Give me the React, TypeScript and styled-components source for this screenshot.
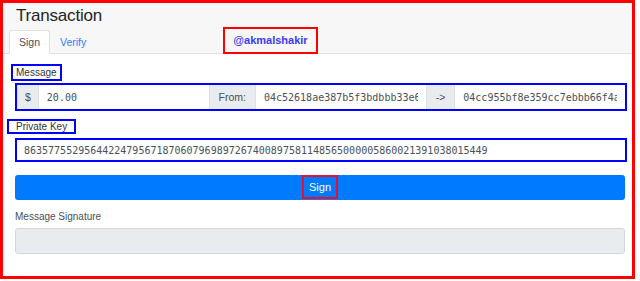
import React from "react";
import styled, { createGlobalStyle } from "styled-components";

const GlobalStyle = createGlobalStyle`
  html, body {
    margin: 0;
    padding: 0;
    background: #fff;
  }
  body {
    font-family: "Liberation Sans", Arial, sans-serif;
    color: #212529;
  }
  * {
    box-sizing: border-box;
  }
`;

const Card = styled.div`
  width: 635px;
  height: 279px;
  border: 3px solid #ff0000;
  display: flex;
  flex-direction: column;
  background: #fff;
`;

const Header = styled.div`
  background: #f7f7f7;
  border-bottom: 1px solid #dee2e6;
  padding-top: 3px;
  display: flex;
  flex-direction: column;
`;

const Title = styled.h1`
  margin: 0 0 4px 13px;
  font-size: 17px;
  line-height: 20px;
  font-weight: 400;
  letter-spacing: -0.2px;
  color: #212529;
`;

const Nav = styled.div`
  display: flex;
  align-items: flex-end;
  padding-left: 6px;
  height: 23px;
`;

const Tab = styled.div<{ $active?: boolean }>`
  height: 24px;
  margin-bottom: -1px;
  padding: 0 9px;
  font-size: 10.5px;
  line-height: 22px;
  border: 1px solid ${(p) => (p.$active ? "#dee2e6" : "transparent")};
  border-bottom: none;
  border-radius: 3px 3px 0 0;
  background: ${(p) => (p.$active ? "#fff" : "transparent")};
  color: ${(p) => (p.$active ? "#495057" : "#2f7dff")};
`;

const Stamp = styled.div`
  margin: 0 0 -1px 127px;
  height: 27px;
  padding: 0 8px;
  border: 2px solid #ff0000;
  font-size: 11px;
  font-weight: 700;
  line-height: 23px;
  color: #3b3bf5;
`;

const Body = styled.div`
  flex: 1;
  padding: 10px 7px 0 12px;
  display: flex;
  flex-direction: column;
  align-items: flex-start;
`;

const Label = styled.span<{ $shift: number; $pad: number; $lh: number }>`
  display: inline-block;
  margin-left: ${(p) => -p.$shift}px;
  padding: 0 ${(p) => p.$pad}px;
  border: 2px solid #0000ff;
  font-size: 10px;
  line-height: ${(p) => p.$lh}px;
  color: #333;
`;

const Group = styled.div`
  align-self: stretch;
  margin: 4px 0 0 2px;
  height: 24px;
  display: flex;
  outline: 2px solid #0000ff;
  background: #fff;
`;

const Addon = styled.div<{ $pad?: number }>`
  flex: none;
  display: flex;
  align-items: center;
  padding: 0 ${(p) => p.$pad ?? 9}px;
  background: #e9ecef;
  border-left: 1px solid #dde1e5;
  border-right: 1px solid #dde1e5;
  font-size: 10.5px;
  color: #495057;
`;

const Field = styled.input`
  flex: 1;
  min-width: 0;
  border: none;
  outline: none;
  padding: 0 8px;
  font-family: "DejaVu Sans Mono", "Liberation Mono", monospace;
  font-size: 10px;
  color: #495057;
  background: #fff;
`;

const KeyField = styled(Field)`
  flex: none;
  align-self: stretch;
  margin: 6px 0 0 2px;
  height: 20px;
  outline: 2px solid #0000ff;
  padding: 0 7px;
`;

const SignButton = styled.button`
  align-self: stretch;
  margin-top: 15px;
  height: 25px;
  border: none;
  border-radius: 3px;
  background: #007bff;
  padding: 0;
  display: flex;
  justify-content: center;
  align-items: flex-start;
  font-family: inherit;
  font-size: 11px;
  color: #fff;
`;

const ButtonText = styled.span`
  padding: 0 5px;
  border: 2px solid #e8102a;
  line-height: 20px;
`;

const PlainLabel = styled.div`
  margin-top: 10px;
  font-size: 10px;
  line-height: 13px;
  color: #495057;
`;

const Signature = styled.div`
  align-self: stretch;
  margin-top: 5px;
  height: 26px;
  background: #e9ecef;
  border: 1px solid #d3d8dd;
  border-radius: 3px;
`;

const fromKey =
  "04c52618ae387b5f3bdbbb33e6f1d09a2c7be4815d3a96c0f27e81b45d3ac9e07f51b2d6e843a0c97f1e25b8d40a6c3e95f712b0d84e6a3c9";
const toKey =
  "04cc955bf8e359cc7ebbb66f4a1c02d8e7b53f9a64c0e12d7b83f5a9e06c41d2b8f37e9a05c6d14b2e8f73a90c5d61e4b2a83f07c9d5e16";
const privateKey =
  "86357755295644224795671870607969897267400897581148565000005860021391038015449";

export default function App() {
  return (
    <>
      <GlobalStyle />
      <Card>
        <Header>
          <Title>Transaction</Title>
          <Nav>
            <Tab $active>Sign</Tab>
            <Tab>Verify</Tab>
            <Stamp>@akmalshakir</Stamp>
          </Nav>
        </Header>
        <Body>
          <Label $shift={4} $pad={3} $lh={13}>
            Message
          </Label>
          <Group>
            <Addon $pad={7}>$</Addon>
            <Field readOnly value="20.00" />
            <Addon>From:</Addon>
            <Field readOnly value={fromKey} />
            <Addon>-&gt;</Addon>
            <Field readOnly value={toKey} />
          </Group>
          <Label $shift={8} $pad={7} $lh={11} style={{ marginTop: 10 }}>
            Private Key
          </Label>
          <KeyField readOnly value={privateKey} />
          <SignButton>
            <ButtonText>Sign</ButtonText>
          </SignButton>
          <PlainLabel>Message Signature</PlainLabel>
          <Signature />
        </Body>
      </Card>
    </>
  );
}
